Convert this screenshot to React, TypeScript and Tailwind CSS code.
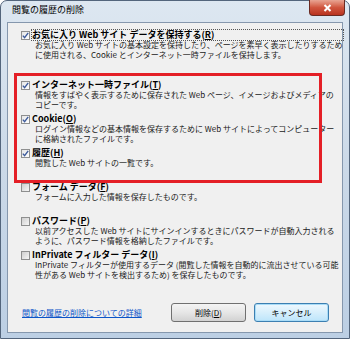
import React from "react";

type Item = {
  label: string;
  key: string;
  after?: string;
  lines: string[];
  checked: boolean;
};

const items: Item[] = [
  {
    label: "インターネット一時ファイル(",
    key: "T",
    after: ")",
    lines: ["情報をすばやく表示するために保存された Web ページ、イメージおよびメディアの", "コピーです。"],
    checked: true,
  },
  {
    label: "Cookie(",
    key: "O",
    after: ")",
    lines: ["ログイン情報などの基本情報を保存するために Web サイトによってコンピューター", "に格納されたファイルです。"],
    checked: true,
  },
  {
    label: "履歴(",
    key: "H",
    after: ")",
    lines: ["閲覧した Web サイトの一覧です。"],
    checked: true,
  },
  {
    label: "フォーム データ(",
    key: "F",
    after: ")",
    lines: ["フォームに入力した情報を保存したものです。"],
    checked: false,
  },
  {
    label: "パスワード(",
    key: "P",
    after: ")",
    lines: ["以前アクセスした Web サイトにサインインするときにパスワードが自動入力される", "ように、パスワード情報を格納したファイルです。"],
    checked: false,
  },
  {
    label: "InPrivate フィルター データ(",
    key: "I",
    after: ")",
    lines: ["InPrivate フィルターが使用するデータ (閲覧した情報を自動的に流出させている可能", "性がある Web サイトを検出するため) を保存したものです。"],
    checked: false,
  },
];

function Check({ checked }: { checked: boolean }) {
  return (
    <span
      className={`mt-[1px] flex h-[9px] w-[9px] shrink-0 items-center justify-center border border-[#8e8f8f] ${
        checked ? "bg-gradient-to-br from-[#e6e6e6] to-white" : "bg-gradient-to-br from-[#cfcfcf] to-[#f6f6f6]"
      }`}
    >
      {checked && (
        <svg width="7" height="7" viewBox="0 0 7 7">
          <path d="M0.8 3.6 L2.6 5.6 L6.2 0.9" fill="none" stroke="#3d5b9c" strokeWidth="1.4" />
        </svg>
      )}
    </span>
  );
}

function Row({ item, focus }: { item: Item; focus?: boolean }) {
  return (
    <div className="flex">
      <Check checked={item.checked} />
      <div className="ml-[2px]">
        <div
          className={`h-[10px] whitespace-nowrap text-[9px] font-bold leading-[10px] text-black ${
            focus ? "outline outline-1 outline-dotted outline-[#555]" : ""
          }`}
        >
          {item.label}
          <span className="underline">{item.key}</span>
          {item.after}
        </div>
        <div className="pl-[3px] text-[8px] leading-[10px] text-[#1a1a1a]">
          {item.lines.map((l) => (
            <div key={l} className="whitespace-nowrap">
              {l}
            </div>
          ))}
        </div>
      </div>
    </div>
  );
}

export default function App() {
  const first: Item = {
    label: "お気に入り Web サイト データを保持する(",
    key: "R",
    after: ")",
    lines: [
      "お気に入り Web サイトの基本設定を保持したり、ページを素早く表示したりするため",
      "に使用される、Cookie とインターネット一時ファイルを保持します。",
    ],
    checked: true,
  };

  return (
    <div
      className="relative h-[339px] w-[350px] overflow-hidden bg-white"
      style={{ fontFamily: '"Noto Sans CJK JP", "Noto Sans", sans-serif' }}
    >
      <div className="flex h-full flex-col rounded-t-[7px] border border-[#53657c] bg-gradient-to-b from-[#dde7f1] via-[#cbd9e8] to-[#bccfe4] px-[6px] pb-[5px]">
        <div className="h-[21px] pl-[5px] pt-[3px] text-[9px] leading-[12px] text-black">閲覧の履歴の削除</div>

        <div className="flex flex-1 flex-col border border-[#8597ad] bg-[#f0f0f0] pl-[13px] pr-[13px] pt-[7px] pb-[10px]">
          <div className="mb-[20px]">
            <Row item={first} focus />
          </div>
          {items.map((it) => (
            <div key={it.key} className="h-[34px]">
              <Row item={it} />
            </div>
          ))}

          <div className="mt-auto flex items-center">
            <a href="#" className="ml-[1px] text-[8px] leading-[10px] text-[#0b55c8] underline">
              閲覧の履歴の削除についての詳細
            </a>
            <div className="ml-auto flex gap-[8px]">
              <button className="flex h-[19px] w-[75px] items-center justify-center rounded-[3px] border border-[#707070] bg-gradient-to-b from-[#f4f4f4] via-[#e6e6e6] to-[#d2d2d2] text-[8px] text-black">
                削除(<span className="underline">D</span>)
              </button>
              <button className="flex h-[19px] w-[75px] items-center justify-center rounded-[3px] border border-[#3c7fb1] bg-gradient-to-b from-[#eef8fe] via-[#d7effc] to-[#bde5fb] text-[8px] text-black shadow-[inset_0_0_0_1px_#a9dcf7]">
                キャンセル
              </button>
            </div>
          </div>
        </div>
      </div>

      <div className="absolute right-[5px] top-0 flex h-[16px] w-[36px] items-center justify-center rounded-b-[4px] border border-t-0 border-[#6a2a22] bg-gradient-to-b from-[#e8a493] via-[#d0553e] to-[#b8321f]">
        <svg width="9" height="8" viewBox="0 0 9 8">
          <path d="M1.5 1 L7.5 7 M7.5 1 L1.5 7" stroke="#fff" strokeWidth="2" />
        </svg>
      </div>

      <div className="absolute left-[14px] top-[73px] h-[110px] w-[308px] border-[3px] border-[#e41f26]" />
    </div>
  );
}
